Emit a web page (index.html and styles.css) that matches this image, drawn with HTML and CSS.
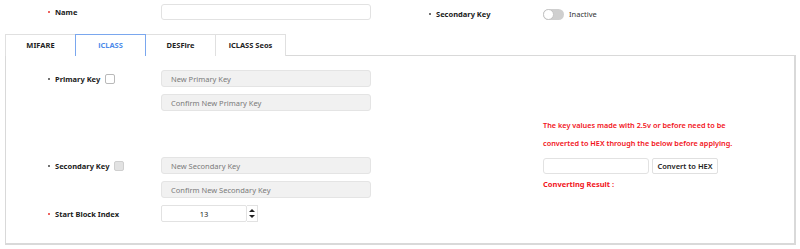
FILE: index.html
```html
<!DOCTYPE html>
<html>
<head>
<meta charset="utf-8">
<link rel="stylesheet" href="styles.css">
</head>
<body>
<div class="page">
  <div class="top">
    <div class="field field-left">
      <div class="lbl"><span class="dot req"></span>Name</div>
      <div class="box box-name"></div>
    </div>
    <div class="field field-right">
      <div class="lbl lbl-right"><span class="dot"></span>Secondary Key</div>
      <span class="toggle"><span class="knob"></span></span>
      <span class="toggle-text">Inactive</span>
    </div>
  </div>

  <div class="tabs">
    <div class="tab">MIFARE</div>
    <div class="tab active">iCLASS</div>
    <div class="tab">DESFire</div>
    <div class="tab">iCLASS Seos</div>
  </div>

  <div class="panel">
    <div class="left">
      <div class="grp">
        <div class="lbl lbl-in"><span class="dot"></span>Primary Key<span class="chk"></span></div>
        <div class="stack">
          <div class="box dis">New Primary Key</div>
          <div class="box dis">Confirm New Primary Key</div>
        </div>
      </div>
      <div class="grp grp-sec">
        <div class="lbl lbl-in"><span class="dot"></span>Secondary Key<span class="chk chk-dis"></span></div>
        <div class="stack">
          <div class="box dis">New Secondary Key</div>
          <div class="box dis">Confirm New Secondary Key</div>
        </div>
      </div>
      <div class="grp grp-start">
        <div class="lbl lbl-in"><span class="dot req"></span>Start Block Index</div>
        <div class="num-wrap">
          <div class="box num">13</div>
          <div class="spin"><span class="up"></span><span class="down"></span></div>
        </div>
      </div>
    </div>
    <div class="right">
      <p class="warn">The key values made with 2.5v or before need to be<br>converted to HEX through the below before applying.</p>
      <div class="conv">
        <div class="box conv-in"></div>
        <div class="btn">Convert to HEX</div>
      </div>
      <p class="result">Converting Result :</p>
    </div>
  </div>
</div>
</body>
</html>
```

FILE: styles.css
```css
* { box-sizing: border-box; }
html, body { margin: 0; padding: 0; background: #fff; }
body {
  font-family: "Noto Sans", "Open Sans", sans-serif;
  font-size: 7.5px;
  color: #222;
  width: 800px;
  height: 249px;
  overflow: hidden;
}
.top {
  display: grid;
  grid-template-columns: 400px 1fr;
  padding-top: 4px;
  height: 34px;
}
.field { display: flex; align-items: flex-start; }
.field-left { padding-left: 48px; }
.field-right { padding-left: 29px; padding-top: 4px; align-items: center; height: 16px; }
.lbl {
  display: flex;
  align-items: center;
  font-weight: 700;
  width: 113px;
  height: 16px;
  color: #1a1a1a;
}
.lbl-right { width: 114px; }
.dot {
  width: 2px; height: 2px;
  background: #444;
  border-radius: 1px;
  margin-right: 5px;
  flex: none;
}
.dot.req { background: #e8322c; }
.box {
  height: 17px;
  border: 1px solid #e2e2e2;
  border-radius: 3px;
  background: #fff;
  display: flex;
  align-items: center;
  padding-left: 9px;
  color: #7a7a7a;
}
.box-name { width: 210px; height: 16px; }
.toggle {
  width: 21px; height: 11px;
  border-radius: 6px;
  background: #cfcfcf;
  position: relative;
  display: inline-block;
  margin-right: 5px;
}
.knob {
  position: absolute;
  left: 0; top: 0;
  width: 11px; height: 11px;
  border-radius: 50%;
  background: #fff;
  border: 1px solid #c4c4c4;
}
.toggle-text { color: #333; }

.tabs {
  display: flex;
  margin-left: 5px;
  height: 21px;
  position: relative;
  z-index: 1;
}
.tab {
  width: 71px;
  height: 22px;
  border: 1px solid #e0e0e0;
  border-bottom: none;
  margin-right: -1px;
  display: flex;
  align-items: center;
  justify-content: center;
  font-weight: 700;
  color: #222;
  background: #fff;
  padding-bottom: 1px;
}
.tab.active {
  border-color: #7aa7ee;
  color: #4d8bea;
  position: relative;
  z-index: 2;
}
.panel {
  margin: 0 4px 0 5px;
  height: 190px;
  border: 1px solid #d9d9d9;
  border-width: 1px 2px 2px 1px;
  display: flex;
  padding: 14px 0 0 42px;
}
.left { width: 323px; flex: none; }
.grp { display: flex; }
.lbl-in { height: 17px; }
.stack { display: flex; flex-direction: column; gap: 7px; }
.stack .box { width: 210px; }
.dis { background: #f1f1f1; border-color: #e4e4e4; }
.chk {
  width: 10px; height: 10px;
  border: 1px solid #b9b9b9;
  border-radius: 2px;
  margin-left: 5px;
  background: #fff;
}
.chk-dis { background: #e2e2e2; border-color: #cfcfcf; }
.grp-sec { margin-top: 46px; }
.grp-start { margin-top: 7px; }
.num-wrap { display: flex; align-items: center; }
.num {
  width: 86px;
  justify-content: center;
  padding-left: 0;
  color: #222;
  border-radius: 2px;
}
.spin {
  width: 11px; height: 17px;
  border: 1px solid #e2e2e2;
  border-left: none;
  display: flex;
  flex-direction: column;
  justify-content: center;
  align-items: center;
  gap: 3px;
}
.up, .down { width: 0; height: 0; border-left: 3px solid transparent; border-right: 3px solid transparent; }
.up { border-bottom: 3px solid #222; }
.down { border-top: 3px solid #222; }

.right { margin-left: 172px; padding-top: 46px; }
.warn {
  margin: 0;
  color: #f2141c;
  font-weight: 600;
  font-size: 7.3px;
  line-height: 18px;
}
.conv { display: flex; margin-top: 6px; gap: 3px; }
.conv-in { width: 106px; height: 16px; }
.btn {
  height: 16px;
  width: 66px;
  border: 1px solid #e0e0e0;
  border-radius: 2px;
  display: flex;
  align-items: center;
  justify-content: center;
  font-weight: 600;
  color: #222;
}
.result {
  margin: 4px 0 0;
  color: #f2141c;
  font-weight: 700;
  line-height: 12px;
}
```
